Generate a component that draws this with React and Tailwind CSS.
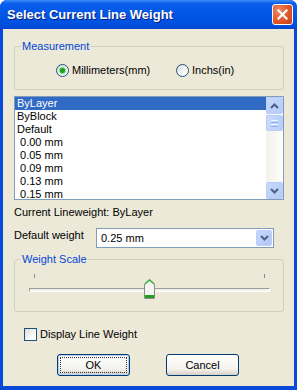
import React from "react";

function Radio({ checked }) {
  return (
    <span className="relative flex h-[13px] w-[13px] items-center justify-center rounded-full border border-[#1C5180] bg-[linear-gradient(135deg,#DCDBD5,#FFFFFF_70%)]">
      {checked && <span className="h-[5px] w-[5px] rounded-full bg-[#21A121] shadow-[0_0_1px_1px_#7BD87B]" />}
    </span>
  );
}

function Chevron({ up }) {
  return (
    <svg width="9" height="6" viewBox="0 0 9 6">
      <polyline
        points={up ? "1,5 4.5,1.5 8,5" : "1,1 4.5,4.5 8,1"}
        fill="none"
        stroke="#4D6185"
        strokeWidth="2"
      />
    </svg>
  );
}

function ScrollBtn({ up }) {
  return (
    <div className="flex h-[17px] w-[17px] items-center justify-center rounded-[2px] border border-[#B9CDF8] bg-[linear-gradient(135deg,#C7D7FC,#B5CBF8)]">
      <Chevron up={up} />
    </div>
  );
}

const items = [
  "ByLayer",
  "ByBlock",
  "Default",
  " 0.00 mm",
  " 0.05 mm",
  " 0.09 mm",
  " 0.13 mm",
  " 0.15 mm",
];

export default function App() {
  return (
    <div
      className="flex h-[390px] w-[297px] flex-col overflow-hidden rounded-t-[7px] bg-[#0A4AD9] text-[11px] leading-[13px] text-black"
      style={{ fontFamily: '"Liberation Sans", Arial, sans-serif' }}
    >
      {/* Title bar */}
      <div className="flex h-[29px] shrink-0 items-center justify-between bg-[linear-gradient(to_bottom,#3C8CF8,#0A5DEB_12%,#0055E5_60%,#0050DE_85%,#0245CE)] pl-[7px] pr-[4px]">
        <span className="text-[13px] font-bold text-white [text-shadow:1px_1px_0_#0A1E78]">
          Select Current Line Weight
        </span>
        <div className="mb-[1px] flex h-[21px] w-[21px] items-center justify-center rounded-[3px] border border-white bg-[radial-gradient(circle_at_30%_30%,#F08A66,#E0562A_55%,#C43E16)]">
          <svg width="11" height="11" viewBox="0 0 11 11">
            <path d="M1.5 1.5 L9.5 9.5 M9.5 1.5 L1.5 9.5" stroke="white" strokeWidth="2.2" strokeLinecap="square" />
          </svg>
        </div>
      </div>

      {/* Body */}
      <div className="mx-[3px] mb-[4px] flex flex-1 flex-col bg-[#ECE9D8] pl-[11px] pr-[10px]">
        {/* Measurement */}
        <fieldset className="mt-[11px] h-[50px] rounded-[3px] border border-[#D0D0BF] px-0">
          <legend className="ml-[6px] px-[1px] text-[#0046D5]">Measurement</legend>
          <div className="mt-[11px] flex items-center pl-[41px]">
            <label className="flex w-[120px] items-center gap-[2px]">
              <Radio checked />
              <span className="ml-[1px]">Millimeters(mm)</span>
            </label>
            <label className="flex items-center gap-[2px]">
              <Radio />
              <span className="ml-[1px]">Inchs(in)</span>
            </label>
          </div>
        </fieldset>

        {/* List */}
        <div className="mt-[6px] flex h-[104px] border border-[#7F9DB9] bg-white">
          <div className="flex-1 overflow-hidden">
            {items.map((t, i) => (
              <div
                key={t}
                className={`h-[13px] whitespace-pre pl-[2px] leading-[13px] ${
                  i === 0 ? "bg-[#316AC5] text-white" : ""
                }`}
              >
                {t}
              </div>
            ))}
          </div>
          <div className="flex w-[17px] flex-col bg-[linear-gradient(to_right,#F3F1EC,#FEFEFB)]">
            <ScrollBtn up />
            <div className="mt-[1px] flex h-[16px] w-[17px] flex-col items-center justify-center gap-[1px] rounded-[2px] border border-[#B9CDF8] bg-[linear-gradient(to_right,#C9DAFC,#B8CEF9)]">
              <div className="h-[1px] w-[7px] bg-[#EEF4FE]" />
              <div className="h-[1px] w-[7px] bg-[#8CB0F8]" />
              <div className="h-[1px] w-[7px] bg-[#EEF4FE]" />
              <div className="h-[1px] w-[7px] bg-[#8CB0F8]" />
            </div>
            <div className="flex-1" />
            <ScrollBtn />
          </div>
        </div>

        <div className="mt-[6px]">Current Lineweight: ByLayer</div>

        {/* Default weight */}
        <div className="mt-[9px] flex items-start">
          <span className="mt-[1px] w-[82px]">Default weight</span>
          <div className="flex h-[20px] w-[178px] items-center justify-between border border-[#7F9DB9] bg-white pl-[4px] pr-[1px]">
            <span>0.25 mm</span>
            <div className="flex h-[16px] w-[16px] items-center justify-center rounded-[2px] border border-[#B9CDF8] bg-[linear-gradient(135deg,#C7D7FC,#B1C8F7)]">
              <Chevron />
            </div>
          </div>
        </div>

        {/* Weight Scale */}
        <fieldset className="mt-[5px] h-[59px] rounded-[3px] border border-[#D0D0BF] px-0">
          <legend className="ml-[6px] px-[1px] text-[#0046D5]">Weight Scale</legend>
          <div className="mt-[8px] flex justify-between pl-[19px] pr-[18px]">
            <div className="h-[4px] w-[1px] bg-[#8A8A8A]" />
            <div className="h-[4px] w-[1px] bg-[#8A8A8A]" />
          </div>
          <div className="relative ml-[14px] mt-[10px] h-[4px] w-[241px] border-t border-l border-[#9D9C99] border-b border-b-white border-r border-r-white bg-[#F2F1EB]">
            <svg
              className="absolute left-[114px] top-[-10px]"
              width="11"
              height="20"
              viewBox="0 0 11 20"
            >
              <polygon points="5.5,0.5 10.5,5 10.5,19.5 0.5,19.5 0.5,5" fill="#F4F4F0" stroke="#8C8C88" />
              <polyline points="1,5 5.5,1 10,5" fill="none" stroke="#3BB33B" strokeWidth="1.5" />
              <rect x="1" y="16" width="9" height="3" fill="#21A121" />
            </svg>
          </div>
        </fieldset>

        {/* Checkbox */}
        <label className="ml-[10px] mt-[16px] flex items-center gap-[3px]">
          <span className="h-[13px] w-[13px] border border-[#1C5180] bg-[linear-gradient(135deg,#DCDBD5,#FFFFFF_75%)]" />
          <span>Display Line Weight</span>
        </label>

        {/* Buttons */}
        <div className="ml-[43px] mt-[13px] flex gap-[36px]">
          <button className="flex h-[22px] w-[73px] items-center justify-center rounded-[3px] border border-[#003C74] bg-[linear-gradient(to_bottom,#FFFFFF,#F4F3EE_70%,#D6D0C5)] p-[2px] shadow-[inset_0_0_0_1px_#B6CDF4]">
            <span className="flex h-full w-full items-center justify-center border border-dotted border-[#333]">OK</span>
          </button>
          <button className="flex h-[22px] w-[73px] items-center justify-center rounded-[3px] border border-[#003C74] bg-[linear-gradient(to_bottom,#FFFFFF,#F4F3EE_70%,#D6D0C5)]">
            Cancel
          </button>
        </div>
      </div>
    </div>
  );
}
